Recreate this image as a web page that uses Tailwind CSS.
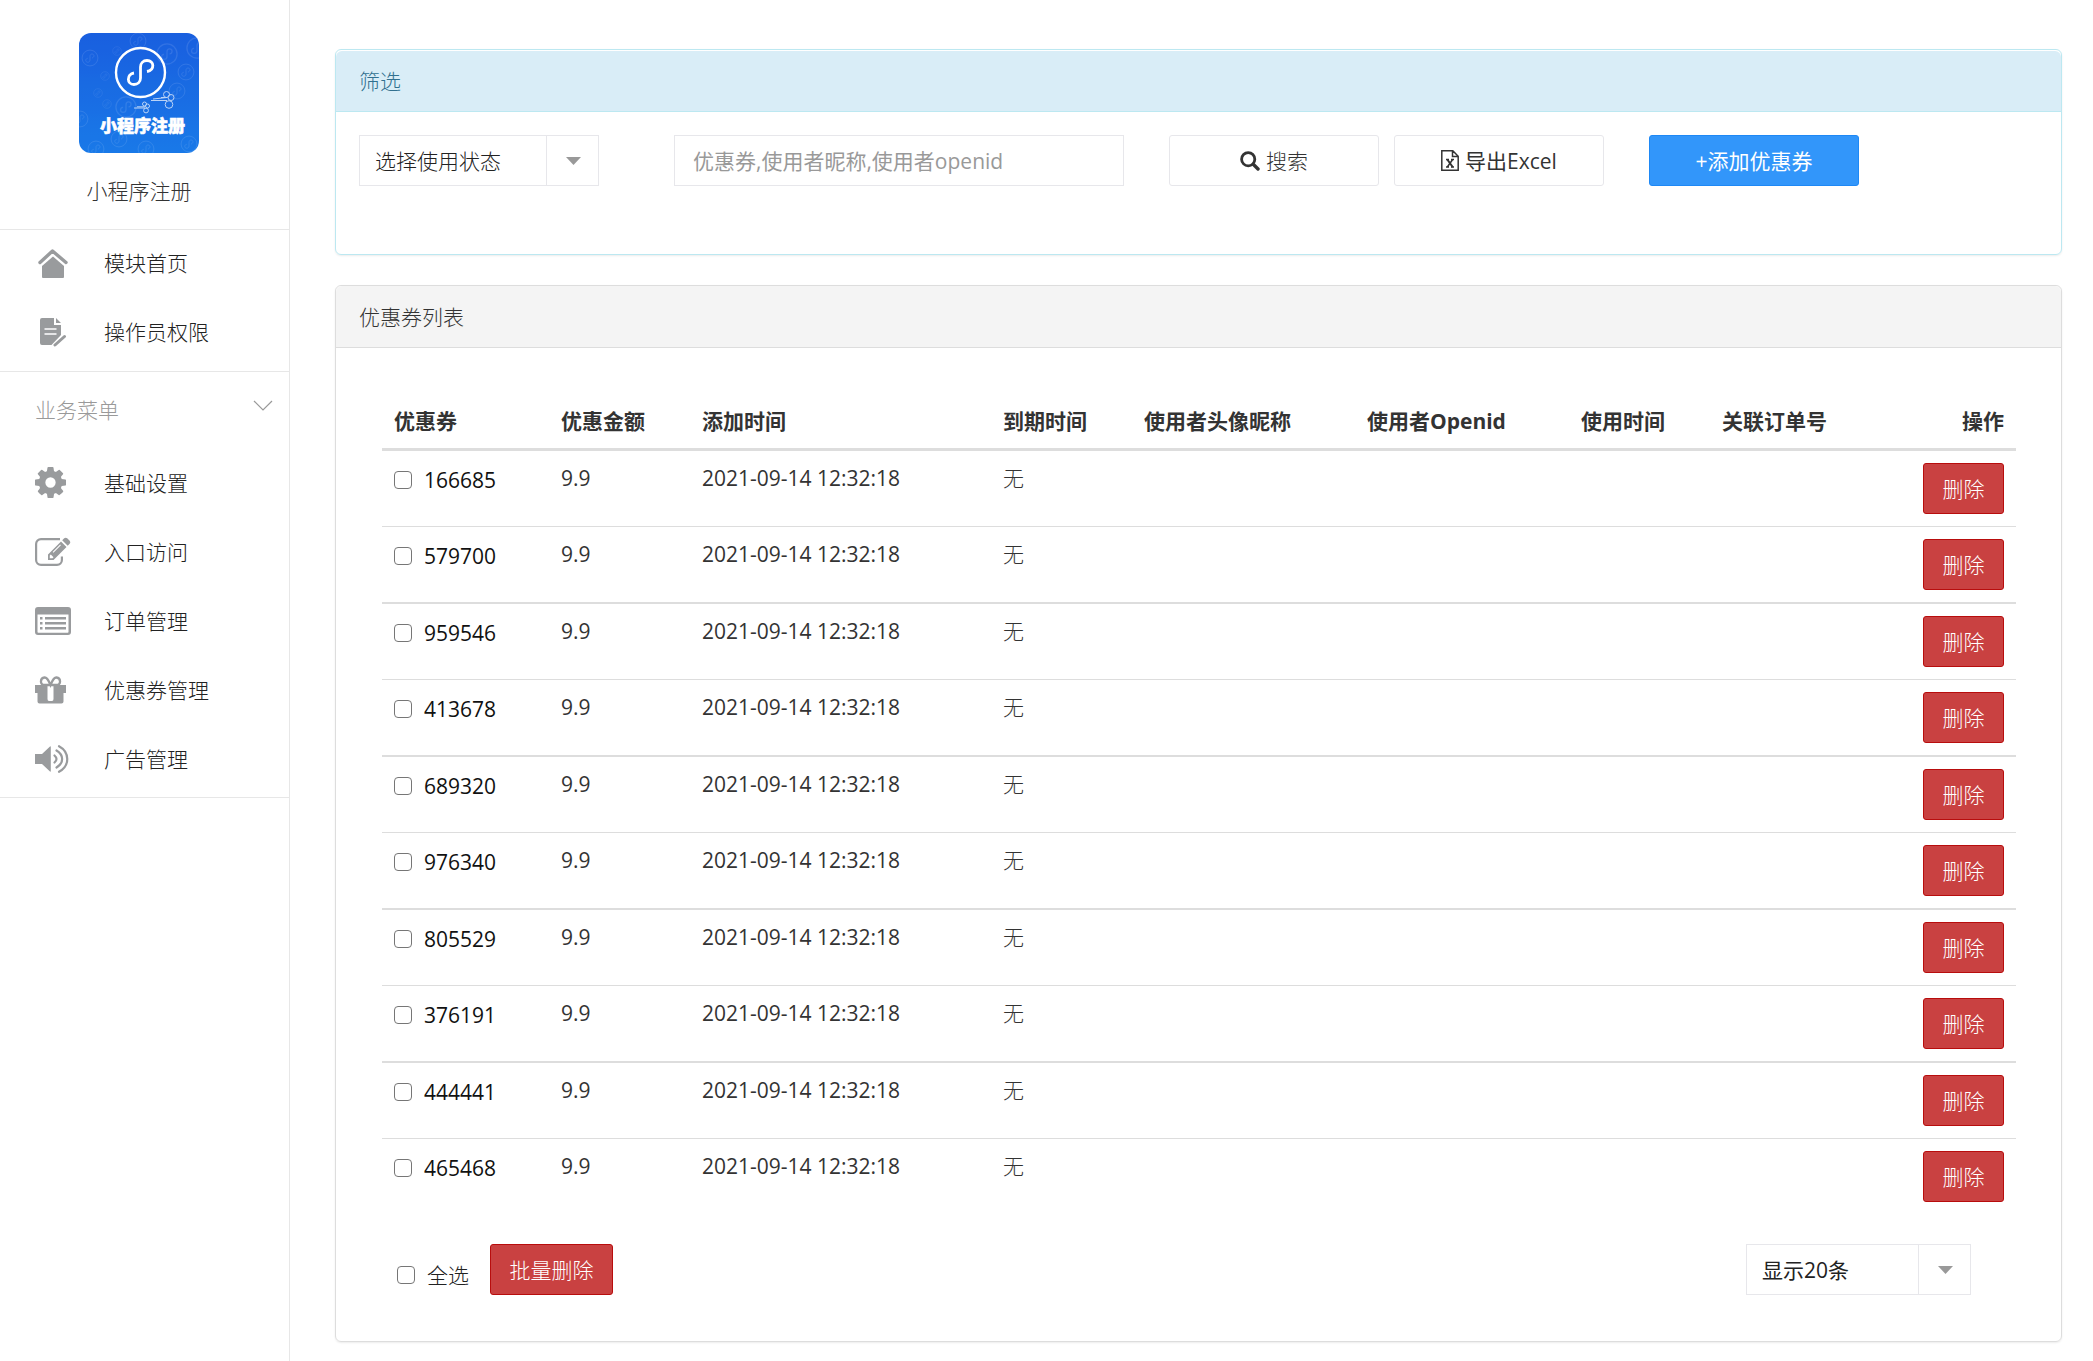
<!DOCTYPE html>
<html lang="zh-CN">
<head>
<meta charset="utf-8">
<title>优惠券管理</title>
<script src="https://cdn.jsdelivr.net/npm/@tailwindcss/browser@4"></script>
</head>
<body class="bg-white font-['Open_Sans','Noto_Sans_CJK_SC',sans-serif] text-[21px] leading-[30px] text-[#333]">
<div class="flex min-h-screen">
  <aside class="w-[290px] shrink-0 border-r border-[#e7e7e7] font-light">
    <div class="flex h-[230px] flex-col items-center gap-[23px] border-b border-[#e7e7e7] pt-[33px] pr-[11px]">
      <svg class="size-[120px] rounded-xl" viewBox="0 0 120 120" role="img" aria-label="小程序注册">
        <defs>
          <linearGradient id="bg" x1="0" y1="0" x2="0" y2="1"><stop offset="0" stop-color="#1a5fdf"/><stop offset="1" stop-color="#1a7ae8"/></linearGradient>
          <g id="ring" fill="none" stroke="#fff"><circle r="24"/><path d="M6 0c8-2 8-12 0-12-4 0-6 3-6 7v11c0 4-3 7-7 7-8-1-8-11 0-12"/></g>
        </defs>
        <rect width="120" height="120" fill="url(#bg)"/>
        <g opacity=".1" stroke-width="3">
          <use href="#ring" transform="translate(59 8) scale(.33)"/><use href="#ring" transform="translate(11 25) scale(.33)"/>
          <use href="#ring" transform="translate(88 21) scale(.42)"/><use href="#ring" transform="translate(118 15) scale(.42)"/>
          <use href="#ring" transform="translate(107 39) scale(.33)"/><use href="#ring" transform="translate(26 43) scale(.18)"/>
          <use href="#ring" transform="translate(47 74) scale(.42)"/><use href="#ring" transform="translate(98 58) scale(.33)"/>
          <use href="#ring" transform="translate(19 60) scale(.18)"/><use href="#ring" transform="translate(28 71) scale(.18)"/>
          <use href="#ring" transform="translate(1 86) scale(.33)"/><use href="#ring" transform="translate(40 106) scale(.33)"/>
          <use href="#ring" transform="translate(17 116) scale(.33)"/><use href="#ring" transform="translate(67 116) scale(.33)"/>
          <use href="#ring" transform="translate(110 111) scale(.33)"/><use href="#ring" transform="translate(38 18) scale(.18)"/>
        </g>
        <g fill="none" stroke="#fff">
          <circle cx="61.500" cy="39.500" r="24.500" stroke-width="2.400"/>
          <path d="M68 38.500c8-1.500 7.500-11 0-11-4 0-6.500 3-6.500 6.500v11c0 4-3 6.500-6.500 6.500-7.500 0-7.500-10.500 0-11.500" stroke-width="2.800"/>
          <g opacity=".7" stroke-width="1"><circle cx="87.500" cy="61.500" r="3"/><circle cx="92" cy="64.500" r="3"/><circle cx="90" cy="71.500" r="3.800"/><path d="M72 67.500h16M74 66l14-1.500h-6"/><circle cx="65.500" cy="71" r="2"/><circle cx="68.500" cy="73" r="2"/><circle cx="67" cy="77.500" r="2.400"/><path d="M55 75h11M58 73.800h8"/></g>
        </g>
        <text x="63.500" y="98.500" text-anchor="middle" font-size="17" font-weight="900" fill="#fff" stroke="#fff" stroke-width=".6">小程序注册</text>
      </svg>
      <div>小程序注册</div>
    </div>

    <nav class="border-b border-[#e7e7e7] pb-[3px] text-[#222]">
      <a href="#" class="flex h-[69px] items-center pb-1">
        <span class="flex w-[104px] pl-[38px] text-[#999b9d]"><svg width="30" height="30" viewBox="0 0 30 30" fill="currentColor"><path d="M2 14.500L14.500 3 28 14.500" fill="none" stroke="currentColor" stroke-width="3.400" stroke-linecap="round" stroke-linejoin="round"/><path d="M15 8.500L26 18v11a1 1 0 0 1-1 1H5a1 1 0 0 1-1-1V18z"/></svg></span>模块首页</a>
      <a href="#" class="flex h-[69px] items-center pb-1">
        <span class="flex w-[104px] pl-[38px] text-[#999b9d]"><svg width="30" height="30" viewBox="0 0 30 30"><path fill="currentColor" d="M4 1h12v7h7V18L13.500 28H4a2 2 0 0 1-2-2V3a2 2 0 0 1 2-2zM18 1l5 5h-5z"/><path stroke="#fff" stroke-width="1.700" d="M6.500 12h12M6.500 17h12"/><path stroke="currentColor" stroke-width="3" stroke-linecap="round" d="M17 28L26.500 19.500"/></svg></span>操作员权限</a>
    </nav>

    <nav class="border-b border-[#e7e7e7] pb-[4px] text-[#222]">
      <button type="button" class="flex h-[76px] w-full items-center justify-between pr-[16px] pl-[35px] text-[#999]">业务菜单
        <svg class="mb-2" width="20" height="12" viewBox="0 0 20 12" fill="none" stroke="#999" stroke-width="1.200"><path d="M1 1l9 9 9-9"/></svg></button>
      <a href="#" class="flex h-[69px] items-center">
        <span class="flex w-[104px] pl-[35px] text-[#999b9d]"><svg width="31" height="31" viewBox="0 0 1536 1536" fill="currentColor"><path d="M1024 768q0-106-75-181t-181-75-181 75-75 181 75 181 181 75 181-75 75-181zm512-109v222q0 12-8 23t-20 13l-185 28q-19 54-39 91 35 50 107 138 10 12 10 25t-9 23q-27 37-99 108t-94 71q-12 0-26-9l-138-108q-44 23-91 38-16 136-29 186-7 28-36 28H657q-14 0-24.500-8.500T621 1506l-28-184q-49-16-90-37l-141 107q-10 9-25 9-14 0-25-11-126-114-165-168-7-10-7-23 0-12 8-23 15-21 51-66.500t54-70.500q-27-50-41-99L29 913q-13-2-21-12.500T0 877V655q0-12 8-23t19-13l186-28q14-46 39-92-40-57-107-138-10-12-10-24 0-10 9-23 26-36 98.500-107.500T337 135q13 0 26 10l138 107q44-23 91-38 16-136 29-186 7-28 36-28h222q14 0 24.500 8.500T915 30l28 184q49 16 90 37l142-107q9-9 24-9 13 0 25 10 129 119 165 170 7 8 7 22 0 12-8 23-15 21-51 66.500t-54 70.500q26 50 41 98l183 28q13 2 21 12.500t8 23.500z"/></svg></span>基础设置</a>
      <a href="#" class="flex h-[69px] items-center">
        <span class="flex w-[104px] pl-[35px] text-[#999b9d]"><svg width="36" height="30" viewBox="0 0 36 30"><path fill="none" stroke="currentColor" stroke-width="2.200" d="M25 2.100H6a4.900 4.900 0 0 0-4.900 4.900V23A4.900 4.900 0 0 0 6 27.900h16a4.900 4.900 0 0 0 4.900-4.900v-3.500"/><path fill="currentColor" fill-rule="evenodd" d="M26 4.500l5.500 5.500L18.500 23H13v-5.500zM14.800 18.500v2.700h2.700l1-1-2.700-2.700zM25.200 7.500l-7.500 7.500.7.700 7.500-7.500zM27.200 3.300l2-2q1.500-1.300 3 0l2.500 2.500q1.300 1.500 0 3l-2 2z"/></svg></span>入口访问</a>
      <a href="#" class="flex h-[69px] items-center">
        <span class="flex w-[104px] pl-[35px] text-[#999b9d]"><svg width="36" height="28" viewBox="0 0 36 28" fill="currentColor"><path fill-rule="evenodd" d="M3 0h30a3 3 0 0 1 3 3v22a3 3 0 0 1-3 3H3a3 3 0 0 1-3-3V3a3 3 0 0 1 3-3zM2.500 7.500V25q0 .8.800.800h29.400q.8 0 .8-.800V7.500z"/><path d="M5 10h2.500v2.500H5zM10 10h21v2.500H10zM5 15h2.500v2.500H5zM10 15h21v2.500H10zM5 20h2.500v2.500H5zM10 20h21v2.500H10z"/></svg></span>订单管理</a>
      <a href="#" class="flex h-[69px] items-center">
        <span class="flex w-[104px] pl-[35px] text-[#999b9d]"><svg width="31" height="28" viewBox="0 0 31 28"><path fill="none" stroke="currentColor" stroke-width="2.300" d="M15.500 9H9.500C4.500 9 5 2 9.500 1.500c3-.3 4.500 4 6 7.500 1.500-3.500 3-7.800 6-7.500C26 2 26.500 9 21.500 9z"/><path fill="currentColor" fill-rule="evenodd" d="M0 9h31v8h-2.500v8.500q0 2-2 2h-22q-2 0-2-2V17H0zM12.500 9.500V23q0 2 1.500 2h3q1.500 0 1.500-2V9.500z"/></svg></span>优惠券管理</a>
      <a href="#" class="flex h-[69px] items-center">
        <span class="flex w-[104px] pl-[35px] text-[#999b9d]"><svg width="34" height="28" viewBox="0 0 34 28"><path fill="currentColor" d="M0 9h7l8-7.500q.8-.5.800.500v24q0 1-.8.500L7 19H0z"/><path fill="none" stroke="currentColor" stroke-width="2.200" stroke-linecap="round" d="M19.500 10.500q4 3.500 0 7M21.500 5.500c7.500 4.500 7.500 12.500 0 17M24 1.200c11 6 11 19.600 0 25.600"/></svg></span>广告管理</a>
    </nav>
  </aside>

  <main class="min-w-0 flex-1 pt-[49px] pr-[31px] pb-5 pl-[45px]">
    <section class="mb-[30px] h-[206px] rounded-md border border-[#bce8f1] shadow-[0_1px_2px_rgba(0,0,0,0.08)]">
      <h2 class="mt-px flex h-[61px] items-center rounded-t-md border-b border-[#bce8f1] bg-[#d9edf7] px-[23px] font-light text-[#31708f]">筛选</h2>
      <form class="flex px-[23px] pt-[23px]">
        <div class="relative w-[240px] shrink-0">
          <select aria-label="使用状态" class="h-[51px] w-full appearance-none border border-[#e7e7eb] bg-white px-[15px] font-light text-[#222]"><option>选择使用状态</option></select>
          <span class="pointer-events-none absolute inset-y-0 right-0 flex w-[53px] items-center justify-center border-l border-[#e7e7eb]"><svg width="15" height="8" viewBox="0 0 15 8"><path fill="#999" d="M0 0h15L7.500 8z"/></svg></span>
        </div>
        <input type="text" aria-label="关键字" placeholder="优惠券,使用者昵称,使用者openid" class="ml-[75px] h-[51px] w-[450px] border border-[#e7e7eb] px-[18px] placeholder:text-[#999]">
        <button type="button" class="ml-[45px] flex h-[51px] w-[210px] items-center justify-center gap-1.5 rounded-[3px] border border-[#e7e7eb] font-light">
          <svg width="20" height="20" viewBox="0 0 20 20" fill="none" stroke="#333"><circle cx="8.200" cy="8.200" r="6.600" stroke-width="2.800"/><path stroke-width="3.400" stroke-linecap="round" d="M13.500 13.500l4.500 4.500"/></svg>搜索</button>
        <button type="button" class="ml-[15px] flex h-[51px] w-[210px] items-center justify-center gap-1.5 rounded-[3px] border border-[#e7e7eb]">
          <svg width="18" height="21" viewBox="0 0 18 21" fill="none" stroke="#333" stroke-width="1.500"><path d="M.8.800h11l5.400 5.400v14H.8zM11.500.800v5.700h5.700M5 9.500h3M10 9.500h3M5 17h3M10 17h3M11.700 9.500L6.300 17"/><path stroke-width="2" d="M6.300 9.500l5.400 7.500"/></svg>导出Excel</button>
        <button type="button" class="ml-[45px] h-[51px] w-[210px] rounded-[3px] border border-[#1e88f5] bg-[#3296fa] text-white">+添加优惠券</button>
      </form>
    </section>

    <section class="rounded-md border border-[#ddd] shadow-[0_1px_2px_rgba(0,0,0,0.08)]">
      <h2 class="flex h-[62px] items-center rounded-t-md border-b border-[#ddd] bg-[#f4f4f4] px-[23px] font-light">优惠券列表</h2>
      <div class="pt-[45px] pr-[45px] pb-[46px] pl-[46px]">
        <table class="w-full table-fixed border-separate border-spacing-0 text-left">
          <colgroup><col class="w-[167px]"><col class="w-[141px]"><col class="w-[301px]"><col class="w-[141px]"><col class="w-[223px]"><col class="w-[214px]"><col class="w-[141px]"><col></colgroup>
          <thead><tr class="h-[58px] [&>th]:border-b-[3px] [&>th]:border-[#ddd] [&>th]:px-3 [&>th]:font-bold [&>th]:whitespace-nowrap">
            <th>优惠券</th><th>优惠金额</th><th>添加时间</th><th>到期时间</th><th>使用者头像昵称</th><th>使用者Openid</th><th>使用时间</th>
            <th><div class="flex justify-between"><span>关联订单号</span><span>操作</span></div></th>
          </tr></thead>
          <tbody id="rows" class="[&>tr>td]:border-[#ddd] [&>tr>td]:px-3 [&>tr>td]:py-3 [&>tr>td]:align-top [&>tr:nth-child(odd)>td]:border-b [&>tr:nth-child(even):not(:last-child)>td]:border-b-2"></tbody>
        </table>
        <div class="flex items-start pt-[30px] pr-[45px] pl-[15px]">
          <label class="flex h-[51px] items-center gap-3 pt-2.5 font-light text-[#222]"><input type="checkbox" class="size-[18px] appearance-none rounded-[4px] border border-[#767676] checked:appearance-auto">全选</label>
          <button type="button" class="ml-[21px] h-[51px] w-[123px] rounded-[3px] border border-[#b80d0d] bg-[#c94141] font-light text-white">批量删除</button>
          <div class="relative ml-auto w-[225px]">
            <select aria-label="每页条数" class="h-[51px] w-full appearance-none border border-[#e7e7eb] bg-white px-[15px] text-[#222]"><option>显示20条</option></select>
            <span class="pointer-events-none absolute inset-y-0 right-0 flex w-[53px] items-center justify-center border-l border-[#e7e7eb]"><svg width="15" height="8" viewBox="0 0 15 8"><path fill="#999" d="M0 0h15L7.500 8z"/></svg></span>
          </div>
        </div>
      </div>
    </section>
  </main>
</div>
<script>
  const codes = ['166685', '579700', '959546', '413678', '689320', '976340', '805529', '376191', '444441', '465468'];
  document.getElementById('rows').innerHTML = codes.map(code => `<tr>
    <td><label class="flex items-center gap-3 pt-0.5 text-[#111]"><input type="checkbox" class="size-[18px] appearance-none rounded-[4px] border border-[#767676] checked:appearance-auto">${code}</label></td>
    <td>9.9</td><td>2021-09-14 12:32:18</td><td class="font-light">无</td><td></td><td></td><td></td>
    <td><button type="button" class="ml-auto block h-[51px] w-[81px] rounded-[3px] border border-[#b80d0d] bg-[#c94141] font-light text-white">删除</button></td>
  </tr>`).join('');
</script>
</body>
</html>
